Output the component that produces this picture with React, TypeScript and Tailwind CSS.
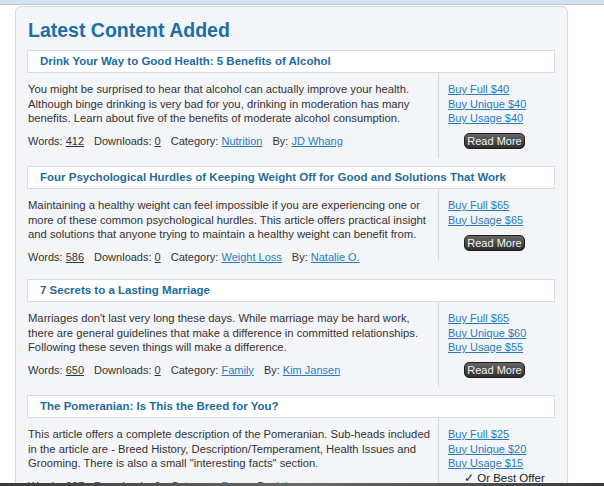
import React from 'react'

type Item = {
  title: string
  lines: string[]
  words: number
  downloads: number
  category: string
  author: string
  prices: string[]
  bestOffer?: boolean
}

const items: Item[] = [
  {
    title: 'Drink Your Way to Good Health: 5 Benefits of Alcohol',
    lines: [
      'You might be surprised to hear that alcohol can actually improve your health.',
      'Although binge drinking is very bad for you, drinking in moderation has many',
      'benefits. Learn about five of the benefits of moderate alcohol consumption.',
    ],
    words: 412,
    downloads: 0,
    category: 'Nutrition',
    author: 'JD Whang',
    prices: ['Buy Full $40', 'Buy Unique $40', 'Buy Usage $40'],
  },
  {
    title: 'Four Psychological Hurdles of Keeping Weight Off for Good and Solutions That Work',
    lines: [
      'Maintaining a healthy weight can feel impossible if you are experiencing one or',
      'more of these common psychological hurdles. This article offers practical insight',
      'and solutions that anyone trying to maintain a healthy weight can benefit from.',
    ],
    words: 586,
    downloads: 0,
    category: 'Weight Loss',
    author: 'Natalie O.',
    prices: ['Buy Full $65', 'Buy Usage $65'],
  },
  {
    title: '7 Secrets to a Lasting Marriage',
    lines: [
      "Marriages don't last very long these days. While marriage may be hard work,",
      'there are general guidelines that make a difference in committed relationships.',
      'Following these seven things will make a difference.',
    ],
    words: 650,
    downloads: 0,
    category: 'Family',
    author: 'Kim Jansen',
    prices: ['Buy Full $65', 'Buy Unique $60', 'Buy Usage $55'],
  },
  {
    title: 'The Pomeranian: Is This the Breed for You?',
    lines: [
      'This article offers a complete description of the Pomeranian. Sub-heads included',
      'in the article are - Breed History, Description/Temperament, Health Issues and',
      'Grooming. There is also a small "interesting facts" section.',
    ],
    words: 927,
    downloads: 0,
    category: 'Dogs',
    author: 'kthompson',
    prices: ['Buy Full $25', 'Buy Unique $20', 'Buy Usage $15'],
    bestOffer: true,
  },
]

function ContentItem({ item }: { item: Item }) {
  return (
    <div className="mb-[8px]">
      {/* title bar */}
      <div className="h-[23px] flex items-center pl-[12px] bg-white border border-[#d8dde4]">
        <span className="text-[11.5px] font-bold text-[#1f6b9d] whitespace-nowrap">{item.title}</span>
      </div>

      <div className="flex items-start">
        <div className="w-[411px] pl-[1px] pt-[9px] pb-[7px] text-[11.25px] leading-[14.5px] text-[#333]">
          <p className="whitespace-nowrap">
            {item.lines.map((l, i) => (
              <React.Fragment key={i}>
                {l}
                {i < item.lines.length - 1 && <br />}
              </React.Fragment>
            ))}
          </p>
          <div className="mt-[8px] flex gap-[10px] whitespace-nowrap text-[11px]">
            <span>
              Words: <span className="underline">{item.words}</span>
            </span>
            <span>
              Downloads: <span className="underline">{item.downloads}</span>
            </span>
            <span>
              Category: <a className="underline text-[#2a7bbd]">{item.category}</a>
            </span>
            <span>
              By: <a className="underline text-[#2a7bbd]">{item.author}</a>
            </span>
          </div>
        </div>

        <div className="w-[117px] border-l border-[#d3d8de] pl-[9px] pt-[9px] pb-[9px] text-[11px] leading-[14.5px]">
          {item.prices.map((p) => (
            <a key={p} className="block underline text-[#2a7bbd] whitespace-nowrap">
              {p}
            </a>
          ))}
          {item.bestOffer ? (
            <div className="ml-[16px] text-[11.5px] text-[#222] whitespace-nowrap">✓ Or Best Offer</div>
          ) : (
            <button className="mt-[7.5px] ml-[16px] w-[61px] h-[16px] rounded-[5px] border border-[#1e1e1e] bg-gradient-to-b from-[#666] to-[#2e2e2e] text-[#f2f2f2] text-[11px] leading-[14px]">
              Read More
            </button>
          )}
        </div>
      </div>
    </div>
  )
}

export default function App() {
  return (
    <div className="w-[604px] h-[486px] flex flex-col overflow-hidden bg-white font-['Liberation_Sans',Arial,sans-serif]">
      <div className="h-[5px] shrink-0 bg-[#d3e3f3] border-b border-[#b9c6d2]" />
      <div className="flex-1 min-h-0 overflow-hidden pl-[15px] pt-[1px]">
        <div className="w-[553px] rounded-t-[6px] border border-[#d4dae1] bg-[#f3f5f8] pl-[11px] pr-[12px] pt-[11px]">
          <h1 className="text-[19.5px] leading-[24px] font-bold text-[#1d6ea6] pl-[1px] mb-[8px]">Latest Content Added</h1>
          {items.map((it) => (
            <ContentItem key={it.title} item={it} />
          ))}
        </div>
      </div>
      <div className="h-[3px] shrink-0 bg-gradient-to-r from-[#3a3a3a] via-[#6a6a6a] to-[#3a3a3a]" />
    </div>
  )
}
